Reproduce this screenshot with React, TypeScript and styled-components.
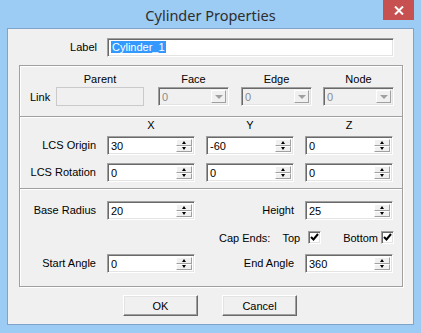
import styled, { createGlobalStyle } from "styled-components";

const GlobalStyle = createGlobalStyle`
  html, body {
    margin: 0;
    padding: 0;
  }
  body {
    font-family: "Liberation Sans", Arial, sans-serif;
    font-size: 11px;
    color: #000;
  }
`;

const SpinBox = ({ value }: { value: string }) => (
    <SpinFrame>
        <SpinText>{value}</SpinText>
        <SpinButtons>
            <SpinButton>
                <Arrow up />
            </SpinButton>
            <SpinButton>
                <Arrow />
            </SpinButton>
        </SpinButtons>
    </SpinFrame>
);

const Combo = () => (
    <ComboFrame>
        <ComboText>0</ComboText>
        <ComboButton>
            <ComboArrow />
        </ComboButton>
    </ComboFrame>
);

const Check = () => (
    <CheckBox>
        <svg width="9" height="9" viewBox="0 0 9 9">
            <path d="M1 4 L3.5 6.5 L8 1" fill="none" stroke="#000" strokeWidth="2" />
        </svg>
    </CheckBox>
);

export default function App() {
    return (
        <>
            <GlobalStyle />
            <Window>
                <TitleBar>
                    <Title>Cylinder Properties</Title>
                    <CloseButton>
                        <svg width="10" height="9" viewBox="0 0 10 9">
                            <path d="M1 0.5 L9 8.5 M9 0.5 L1 8.5" stroke="#fff" strokeWidth="2" />
                        </svg>
                    </CloseButton>
                </TitleBar>
                <Client>
                    <LabelRow>
                        <FieldLabel>Label</FieldLabel>
                        <TextField>
                            <Selected>Cylinder_1</Selected>
                        </TextField>
                    </LabelRow>

                    <Group height={52}>
                        <LinkGrid>
                            <span />
                            <ColHeader width={88}>Parent</ColHeader>
                            <ColHeader width={71}>Face</ColHeader>
                            <ColHeader width={71}>Edge</ColHeader>
                            <ColHeader width={71}>Node</ColHeader>
                            <LinkLabel>Link</LinkLabel>
                            <ParentField />
                            <Combo />
                            <Combo />
                            <Combo />
                        </LinkGrid>
                    </Group>

                    <Group height={73}>
                        <LcsGrid>
                            <span />
                            <AxisHeader>X</AxisHeader>
                            <AxisHeader>Y</AxisHeader>
                            <AxisHeader>Z</AxisHeader>
                            <FieldLabel>LCS Origin</FieldLabel>
                            <SpinBox value="30" />
                            <SpinBox value="-60" />
                            <SpinBox value="0" />
                            <FieldLabel>LCS Rotation</FieldLabel>
                            <SpinBox value="0" />
                            <SpinBox value="0" />
                            <SpinBox value="0" />
                        </LcsGrid>
                    </Group>

                    <Group height={99}>
                        <ShapeGrid>
                            <FieldLabel>Base Radius</FieldLabel>
                            <SpinBox value="20" />
                            <FieldLabel>Height</FieldLabel>
                            <SpinBox value="25" />
                            <CapRow>
                                <CapText gap={12}>Cap Ends:</CapText>
                                <CapText gap={8}>Top</CapText>
                                <CheckSlot gap={22}>
                                    <Check />
                                </CheckSlot>
                                <CapText gap={3}>Bottom</CapText>
                                <CheckSlot gap={-1}>
                                    <Check />
                                </CheckSlot>
                            </CapRow>
                            <FieldLabel>Start Angle</FieldLabel>
                            <SpinBox value="0" />
                            <FieldLabel>End Angle</FieldLabel>
                            <SpinBox value="360" />
                        </ShapeGrid>
                    </Group>

                    <ButtonRow>
                        <PushButton>OK</PushButton>
                        <PushButton>Cancel</PushButton>
                    </ButtonRow>
                </Client>
            </Window>
        </>
    );
}

const Window = styled.div`
    width: 421px;
    height: 333px;
    background: #9ccbf3;
    display: flex;
    flex-direction: column;
    box-sizing: border-box;
`;

const TitleBar = styled.div`
    height: 29px;
    display: grid;
    grid-template-columns: 1fr auto 1fr;
    align-items: start;
`;

const Title = styled.div`
    grid-column: 2;
    padding-top: 5px;
    line-height: 20px;
    font-family: "Noto Sans", "Open Sans", sans-serif;
    font-size: 14.5px;
    color: #2e2e2e;
`;

const CloseButton = styled.div`
    grid-column: 3;
    justify-self: end;
    margin-right: 7px;
    width: 31px;
    height: 20px;
    background: #c75050;
    display: flex;
    align-items: center;
    justify-content: center;
`;

const Client = styled.div`
    margin: 0 7px 8px 7px;
    height: 294px;
    border: 1px solid #7ea4cc;
    background: #f0f0f0;
    padding: 9px 10px 0 11px;
`;

const LabelRow = styled.div`
    display: grid;
    grid-template-columns: 78px 287px;
    column-gap: 10px;
    align-items: center;
    height: 19px;
    margin-bottom: 8px;
`;

const FieldLabel = styled.div`
    text-align: right;
    white-space: nowrap;
    line-height: 19px;
`;

const sunken = `
    box-sizing: border-box;
    border: 1px solid;
    border-color: #a0a0a0 #ffffff #ffffff #a0a0a0;
    box-shadow: inset 1px 1px 0 #696969, inset -1px -1px 0 #e3e3e3;
`;

const TextField = styled.div`
    ${sunken};
    height: 19px;
    background: #fff;
    padding: 2px 0 0 3px;
    line-height: 13px;
`;

const Selected = styled.span`
    background: #3399ff;
    color: #fff;
    padding: 0 1px;
`;

const Group = styled.div<{ height: number }>`
    box-sizing: border-box;
    height: ${({ height }) => height}px;
    border: 1px solid #a0a0a0;
    box-shadow: inset 1px 1px 0 #fff, 1px 1px 0 #fff;
    & + & {
        margin-top: -1px;
    }
`;

const LinkGrid = styled.div`
    display: grid;
    grid-template-columns: 36px 88px 85px 83px 82px;
    grid-template-rows: 13px 19px;
    row-gap: 2px;
    padding-top: 6px;
    align-items: center;
    justify-items: end;
    & > :first-child,
    & > :nth-child(6) {
        justify-self: stretch;
    }
`;

const ColHeader = styled.div<{ width: number }>`
    width: ${({ width }) => width}px;
    text-align: center;
`;

const LinkLabel = styled.div`
    padding-left: 10px;
`;

const ParentField = styled.div`
    box-sizing: border-box;
    width: 88px;
    height: 19px;
    border: 1px solid #cacaca;
    background: #f0f0f0;
`;

const ComboFrame = styled.div`
    ${sunken};
    width: 71px;
    height: 19px;
    background: #f0f0f0;
    display: flex;
    align-items: stretch;
    padding: 2px;
`;

const ComboText = styled.div`
    flex: 1;
    color: #8a8a8a;
    line-height: 15px;
    padding-left: 1px;
`;

const ComboButton = styled.div`
    width: 15px;
    box-sizing: border-box;
    border: 1px solid;
    border-color: #fff #a0a0a0 #a0a0a0 #fff;
    background: #f0f0f0;
    display: flex;
    align-items: center;
    justify-content: center;
`;

const ComboArrow = styled.div`
    width: 0;
    height: 0;
    border-left: 4px solid transparent;
    border-right: 4px solid transparent;
    border-top: 4px solid #a0a0a0;
`;

const LcsGrid = styled.div`
    display: grid;
    grid-template-columns: 76px 88px 88px 88px;
    grid-template-rows: 13px 23px 27px;
    column-gap: 11px;
    padding-top: 2px;
    align-items: end;
`;

const AxisHeader = styled.div`
    align-self: start;
    line-height: 13px;
    text-align: center;
`;

const SpinFrame = styled.div`
    ${sunken};
    width: 88px;
    height: 19px;
    background: #fff;
    display: flex;
    padding: 2px 2px 2px 3px;
`;

const SpinText = styled.div`
    flex: 1;
    line-height: 15px;
`;

const SpinButtons = styled.div`
    width: 16px;
    display: flex;
    flex-direction: column;
`;

const SpinButton = styled.div`
    flex: 1;
    box-sizing: border-box;
    border: 1px solid;
    border-color: #fff #a0a0a0 #a0a0a0 #fff;
    background: #f0f0f0;
    display: flex;
    align-items: center;
    justify-content: center;
`;

const Arrow = styled.div<{ up?: boolean }>`
    width: 0;
    height: 0;
    border-left: 2.5px solid transparent;
    border-right: 2.5px solid transparent;
    ${({ up }) => (up ? "border-bottom: 3px solid #000;" : "border-top: 3px solid #000;")}
`;

const ShapeGrid = styled.div`
    display: grid;
    grid-template-columns: 76px 88px 88px 88px;
    grid-template-rows: 19px 24px 29px;
    column-gap: 11px;
    padding-top: 12px;
    align-items: end;
`;

const CapRow = styled.div`
    grid-column: 2 / -1;
    display: flex;
    justify-content: flex-end;
    align-items: center;
    height: 13px;
`;

const CapText = styled.span<{ gap: number }>`
    margin-right: ${({ gap }) => gap}px;
    white-space: nowrap;
`;

const CheckSlot = styled.span<{ gap: number }>`
    margin-right: ${({ gap }) => gap}px;
    display: flex;
`;

const CheckBox = styled.div`
    box-sizing: border-box;
    width: 13px;
    height: 13px;
    border: 1px solid;
    border-color: #a0a0a0 #fff #fff #a0a0a0;
    box-shadow: inset 1px 1px 0 #696969, inset -1px -1px 0 #e3e3e3;
    background: #fff;
    display: flex;
    align-items: center;
    justify-content: center;
`;

const ButtonRow = styled.div`
    display: flex;
    justify-content: center;
    gap: 24px;
    margin-top: 8px;
    padding-right: 2px;
`;

const PushButton = styled.div`
    box-sizing: border-box;
    width: 75px;
    height: 21px;
    border: 1px solid;
    border-color: #fff #696969 #696969 #fff;
    box-shadow: inset -1px -1px 0 #a0a0a0, inset 1px 1px 0 #e3e3e3;
    background: #f0f0f0;
    display: flex;
    align-items: center;
    justify-content: center;
`;
